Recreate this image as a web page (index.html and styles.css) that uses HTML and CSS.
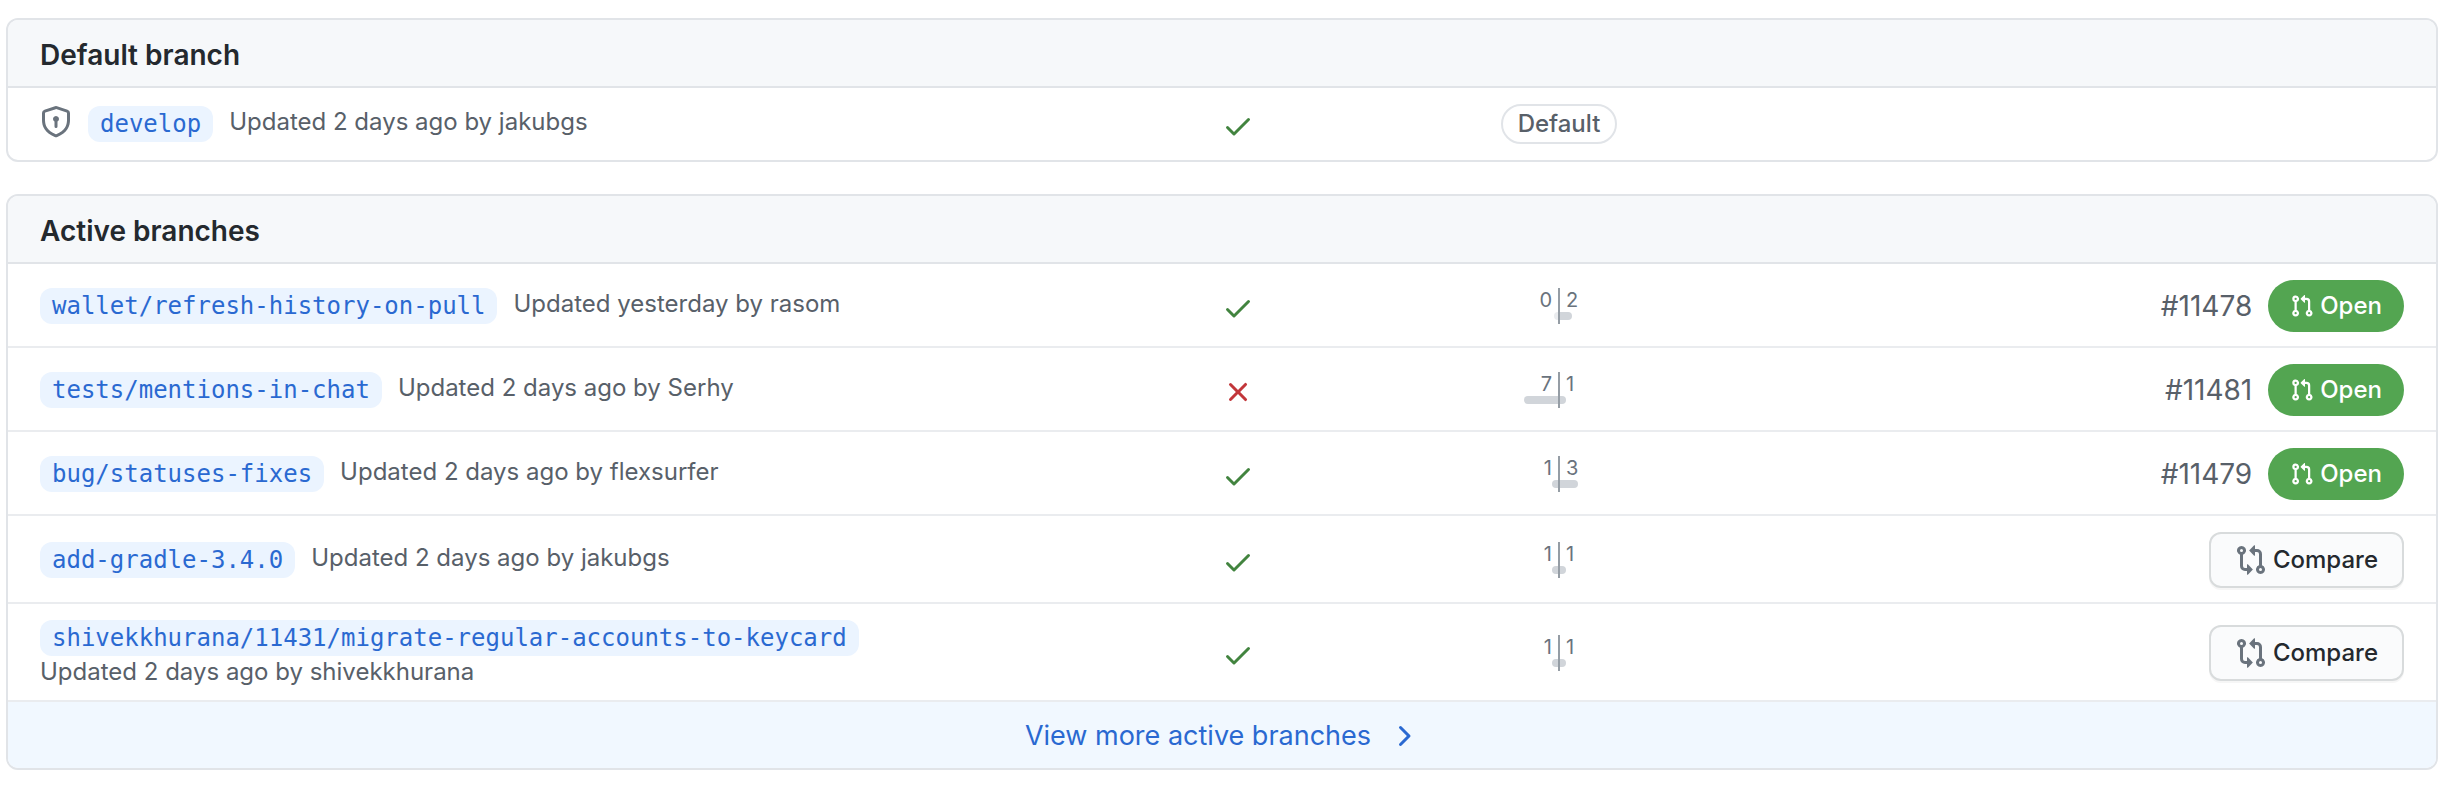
FILE: index.html
```html
<!DOCTYPE html>
<html lang="en">
<head>
    <meta charset="UTF-8">
    <meta name="viewport" content="width=device-width, initial-scale=1.0">
    <title>Branches</title>
    <link rel="stylesheet" href="styles.css">
</head>
<body>

    <!-- Shared icons -->
    <svg class="sprite" aria-hidden="true">
        <symbol id="icon-check" viewBox="0 0 16 16">
            <path fill-rule="evenodd" d="M13.78 4.22a.75.75 0 010 1.06l-7.25 7.25a.75.75 0 01-1.06 0L2.22 9.28a.75.75 0 011.06-1.06L6 10.94l6.72-6.72a.75.75 0 011.06 0z"/>
        </symbol>
        <symbol id="icon-x" viewBox="0 0 16 16">
            <path fill-rule="evenodd" d="M3.72 3.72a.75.75 0 011.06 0L8 6.94l3.22-3.22a.75.75 0 111.06 1.06L9.06 8l3.22 3.22a.75.75 0 11-1.06 1.06L8 9.06l-3.22 3.22a.75.75 0 01-1.06-1.06L6.94 8 3.72 4.78a.75.75 0 010-1.06z"/>
        </symbol>
        <symbol id="icon-shield-lock" viewBox="0 0 16 16">
            <path fill-rule="evenodd" d="M8.533.133a1.75 1.75 0 00-1.066 0l-5.25 1.68A1.75 1.75 0 001 3.48V7c0 1.566.32 3.182 1.303 4.682.983 1.498 2.585 2.813 5.032 3.855a1.7 1.7 0 001.33 0c2.447-1.042 4.049-2.357 5.032-3.855C14.68 10.182 15 8.566 15 7V3.48a1.75 1.75 0 00-1.217-1.667L8.533.133zm-.61 1.429a.25.25 0 01.153 0l5.25 1.68a.25.25 0 01.174.238V7c0 1.358-.275 2.666-1.057 3.86-.784 1.194-2.121 2.34-4.366 3.297a.2.2 0 01-.154 0c-2.245-.956-3.582-2.104-4.366-3.298C2.775 9.666 2.5 8.36 2.5 7V3.48a.25.25 0 01.174-.237l5.25-1.68zM9.5 6.5a1.5 1.5 0 01-.75 1.3v2.45a.75.75 0 01-1.5 0V7.8A1.5 1.5 0 119.5 6.5z"/>
        </symbol>
        <symbol id="icon-pull-request" viewBox="0 0 16 16">
            <path fill-rule="evenodd" d="M7.177 3.073L9.573.677A.25.25 0 0110 .854v4.792a.25.25 0 01-.427.177L7.177 3.427a.25.25 0 010-.354zM3.75 2.5a.75.75 0 100 1.5.75.75 0 000-1.5zm-2.25.75a2.25 2.25 0 113 2.122v5.256a2.251 2.251 0 11-1.5 0V5.372A2.25 2.25 0 011.5 3.25zM11 2.5h-1V4h1a1 1 0 011 1v5.628a2.251 2.251 0 101.5 0V5A2.5 2.5 0 0011 2.5zm1 10.25a.75.75 0 111.5 0 .75.75 0 01-1.5 0zM3.75 12a.75.75 0 100 1.5.75.75 0 000-1.5z"/>
        </symbol>
        <symbol id="icon-compare" viewBox="0 0 16 16">
            <path fill-rule="evenodd" d="M9.573.677L7.177 3.073a.25.25 0 000 .354l2.396 2.396A.25.25 0 0010 5.646V4h1a1 1 0 011 1v5.628a2.251 2.251 0 101.5 0V5A2.5 2.5 0 0011 2.5h-1V.854a.25.25 0 00-.427-.177zM6 12v-1.646a.25.25 0 01.427-.177l2.396 2.396a.25.25 0 010 .354l-2.396 2.396A.25.25 0 016 15.146V13.5H5A2.5 2.5 0 012.5 11V5.372a2.25 2.25 0 111.5 0V11a1 1 0 001 1h1zm6.75 0a.75.75 0 100 1.5.75.75 0 000-1.5zM4 3.25a.75.75 0 11-1.5 0 .75.75 0 011.5 0z"/>
        </symbol>
        <symbol id="icon-chevron" viewBox="0 0 16 16">
            <path fill-rule="evenodd" d="M6.22 3.22a.75.75 0 011.06 0l4.25 4.25a.75.75 0 010 1.06l-4.25 4.25a.75.75 0 01-1.06-1.06L9.94 8 6.22 4.28a.75.75 0 010-1.06z"/>
        </symbol>
    </svg>

    <section class="box">
        <h2 class="box-header">Default branch</h2>
        <ul class="branch-list">
            <li class="branch">
                <div class="branch-info">
                    <svg class="icon icon-muted"><use href="#icon-shield-lock"/></svg>
                    <a class="branch-name" href="#">develop</a>
                    <span class="updated">Updated 2 days ago by jakubgs</span>
                </div>
                <div class="status"><svg class="icon icon-success"><use href="#icon-check"/></svg></div>
                <div class="center"><span class="label">Default</span></div>
            </li>
        </ul>
    </section>

    <section class="box">
        <h2 class="box-header">Active branches</h2>
        <ul class="branch-list">
            <li class="branch">
                <div class="branch-info">
                    <a class="branch-name" href="#">wallet/refresh-history-on-pull</a>
                    <span class="updated">Updated yesterday by rasom</span>
                </div>
                <div class="status"><svg class="icon icon-success"><use href="#icon-check"/></svg></div>
                <div class="divergence">
                    <div class="behind"><span class="count">0</span><span class="meter meter-empty" style="width: 4px"></span></div>
                    <div class="ahead"><span class="count">2</span><span class="meter" style="width: 12px"></span></div>
                </div>
                <div class="actions">
                    <a class="pr-number" href="#">#11478</a>
                    <a class="state" href="#"><svg class="icon icon-small"><use href="#icon-pull-request"/></svg>Open</a>
                </div>
            </li>
            <li class="branch">
                <div class="branch-info">
                    <a class="branch-name" href="#">tests/mentions-in-chat</a>
                    <span class="updated">Updated 2 days ago by Serhy</span>
                </div>
                <div class="status"><svg class="icon icon-failure"><use href="#icon-x"/></svg></div>
                <div class="divergence">
                    <div class="behind"><span class="count">7</span><span class="meter" style="width: 34px"></span></div>
                    <div class="ahead"><span class="count">1</span><span class="meter" style="width: 6px"></span></div>
                </div>
                <div class="actions">
                    <a class="pr-number" href="#">#11481</a>
                    <a class="state" href="#"><svg class="icon icon-small"><use href="#icon-pull-request"/></svg>Open</a>
                </div>
            </li>
            <li class="branch">
                <div class="branch-info">
                    <a class="branch-name" href="#">bug/statuses-fixes</a>
                    <span class="updated">Updated 2 days ago by flexsurfer</span>
                </div>
                <div class="status"><svg class="icon icon-success"><use href="#icon-check"/></svg></div>
                <div class="divergence">
                    <div class="behind"><span class="count">1</span><span class="meter" style="width: 6px"></span></div>
                    <div class="ahead"><span class="count">3</span><span class="meter" style="width: 18px"></span></div>
                </div>
                <div class="actions">
                    <a class="pr-number" href="#">#11479</a>
                    <a class="state" href="#"><svg class="icon icon-small"><use href="#icon-pull-request"/></svg>Open</a>
                </div>
            </li>
            <li class="branch">
                <div class="branch-info">
                    <a class="branch-name" href="#">add-gradle-3.4.0</a>
                    <span class="updated">Updated 2 days ago by jakubgs</span>
                </div>
                <div class="status"><svg class="icon icon-success"><use href="#icon-check"/></svg></div>
                <div class="divergence">
                    <div class="behind"><span class="count">1</span><span class="meter" style="width: 6px"></span></div>
                    <div class="ahead"><span class="count">1</span><span class="meter" style="width: 6px"></span></div>
                </div>
                <div class="actions">
                    <button class="btn" type="button"><svg class="icon icon-muted"><use href="#icon-compare"/></svg>Compare</button>
                </div>
            </li>
            <li class="branch">
                <div class="branch-info">
                    <a class="branch-name" href="#">shivekkhurana/11431/migrate-regular-accounts-to-keycard</a>
                    <span class="updated">Updated 2 days ago by shivekkhurana</span>
                </div>
                <div class="status"><svg class="icon icon-success"><use href="#icon-check"/></svg></div>
                <div class="divergence">
                    <div class="behind"><span class="count">1</span><span class="meter" style="width: 6px"></span></div>
                    <div class="ahead"><span class="count">1</span><span class="meter" style="width: 6px"></span></div>
                </div>
                <div class="actions">
                    <button class="btn" type="button"><svg class="icon icon-muted"><use href="#icon-compare"/></svg>Compare</button>
                </div>
            </li>
        </ul>
        <a class="view-more" href="#">View more active branches<svg class="icon"><use href="#icon-chevron"/></svg></a>
    </section>

</body>
</html>
```
FILE: styles.css
```css
* {
    box-sizing: border-box;
}

body {
    margin: 0;
    padding: 18px 6px;
    background-color: #fff;
    color: #24292e;
    font-family: Inter, "Liberation Sans", sans-serif;
    font-size: 24px;
    line-height: 36px;
}

a {
    text-decoration: none;
}

.sprite {
    display: none;
}

/* Icons */
.icon {
    display: block;
    flex-shrink: 0;
    width: 32px;
    height: 32px;
    fill: currentColor;
}

.icon-small {
    width: 24px;
    height: 24px;
}

.icon-muted {
    color: #6a737d;
}

.icon-success {
    color: #42843f;
}

.icon-failure {
    color: #c2363a;
}

/* Box */
.box {
    margin-bottom: 32px;
    border: 2px solid #e1e4e8;
    border-radius: 12px;
    overflow: hidden;
}

.box:last-child {
    margin-bottom: 0;
}

.box-header {
    margin: 0;
    padding: 18px 32px 14px;
    background-color: #f6f8fa;
    border-bottom: 2px solid #e1e4e8;
    font-size: 28px;
    font-weight: 600;
    line-height: 34px;
}

/* Branch rows */
.branch-list {
    margin: 0;
    padding: 0;
    list-style: none;
}

.branch {
    display: grid;
    grid-template-columns: 50% calc(100% / 12) 280px 1fr;
    align-items: center;
    padding: 16px 32px 14px;
    border-bottom: 2px solid #eaecef;
}

.branch:only-child {
    padding-bottom: 16px;
    border-bottom: 0;
}

.branch-info {
    display: flex;
    flex-wrap: wrap;
    align-items: flex-start;
    column-gap: 16px;
}

.branch-name {
    padding: 0 12px;
    border-radius: 12px;
    background-color: #ebf4ff;
    color: #2a69d1;
    font-family: "DejaVu Sans Mono", monospace;
}

.updated {
    padding-top: 2px;
    color: #586069;
    line-height: 28px;
}

.status {
    padding-top: 4px;
}

.center {
    display: flex;
    justify-content: center;
}

.label {
    padding: 0 15px;
    border: 2px solid #e1e4e8;
    border-radius: 20px;
    color: #586069;
    font-weight: 500;
}

/* Commits behind and ahead */
.divergence {
    display: grid;
    grid-template-columns: 1fr 1fr;
    height: 36px;
    padding-left: 2px;
    color: #6a737d;
    font-size: 20px;
    line-height: 24px;
}

.behind,
.ahead {
    display: flex;
    flex-direction: column;
}

.behind {
    align-items: flex-end;
    border-right: 2px solid #959da5;
}

.behind .count {
    padding-right: 6px;
}

.ahead .count {
    padding-left: 6px;
}

.meter {
    height: 8px;
    background-color: #d1d5da;
}

.behind .meter {
    border-radius: 4px 0 0 4px;
}

.ahead .meter {
    border-radius: 0 4px 4px 0;
}

.behind .meter-empty {
    background-color: #eaecef;
}

/* Pull request and compare */
.actions {
    display: flex;
    align-items: center;
    justify-content: flex-end;
    gap: 16px;
}

.pr-number {
    color: #586069;
    font-size: 28px;
}

.state {
    display: flex;
    align-items: center;
    gap: 6px;
    padding: 8px 22px;
    border-radius: 26px;
    background-color: #53a551;
    color: #fff;
    font-weight: 500;
}

.btn {
    display: flex;
    align-items: center;
    gap: 6px;
    padding: 8px 24px;
    border: 2px solid #d8dbdc;
    border-radius: 12px;
    background-color: #fafbfc;
    box-shadow: 0 2px 0 rgba(27, 31, 35, 0.04);
    color: #24292e;
    font: inherit;
    font-weight: 500;
    cursor: pointer;
}

.view-more {
    display: flex;
    align-items: center;
    justify-content: center;
    gap: 16px;
    padding: 17px 32px 15px;
    background-color: #f1f8ff;
    color: #2a69d1;
    font-size: 27px;
    line-height: 34px;
}
```
